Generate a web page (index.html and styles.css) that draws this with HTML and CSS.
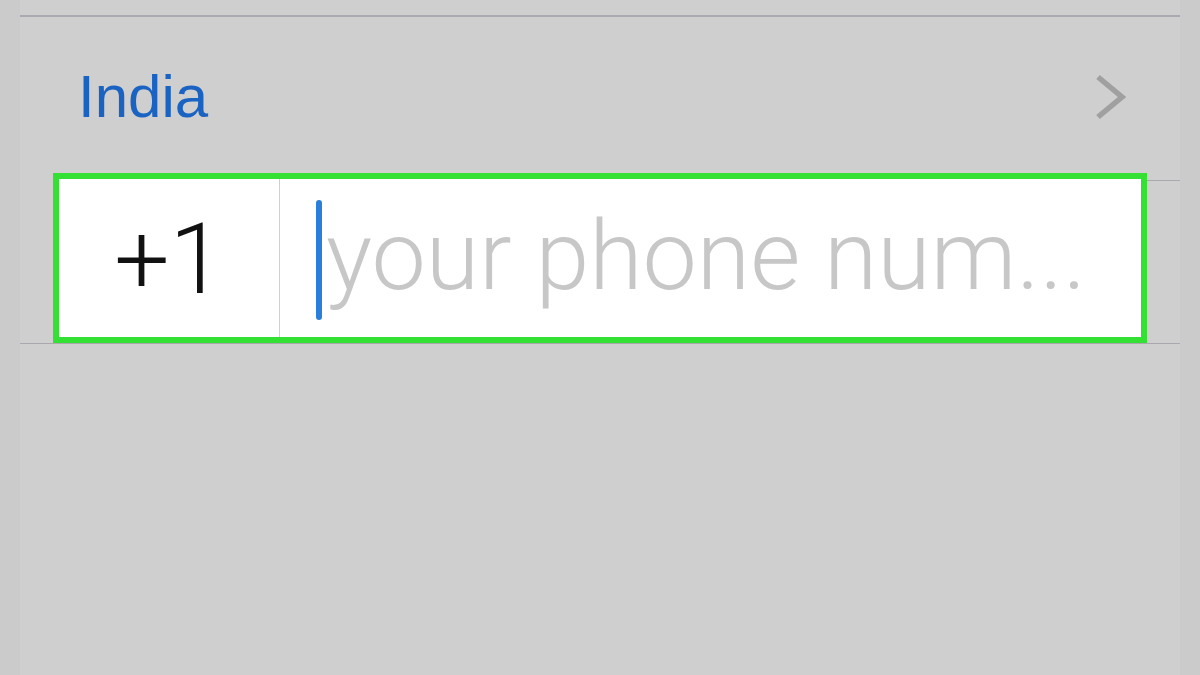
FILE: index.html
```html
<!DOCTYPE html>
<html>
<head>
<meta charset="utf-8">
<link rel="stylesheet" href="styles.css">
</head>
<body>
<div class="screen">
  <div class="rule"></div>
  <div class="country">
    <span class="country-name">India</span>
    <svg class="chevron" width="32" height="48" viewBox="0 0 32 48"><polyline points="4,4 28,24 4,44" fill="none" stroke="#a0a0a0" stroke-width="5.5"/></svg>
  </div>
  <div class="phone">
    <div class="box">
      <div class="code">+1</div>
      <div class="field">
        <span class="cursor"></span>
        <span class="placeholder">your phone num...</span>
      </div>
    </div>
    <div class="tail"></div>
  </div>
</div>
</body>
</html>
```
FILE: styles.css
```css
html, body { margin: 0; padding: 0; }
body {
  background: #cbcbcb;
  font-family: "Liberation Sans", Arial, sans-serif;
  width: 1200px;
  height: 675px;
  overflow: hidden;
}
.screen {
  margin: 0 20px;
  height: 675px;
  background: #cfcfcf;
  padding-top: 15px;
  box-sizing: border-box;
}
.rule {
  height: 2px;
  background: #aaaab2;
}
.country {
  display: flex;
  justify-content: space-between;
  align-items: flex-start;
  height: 156px;
  box-sizing: border-box;
  padding: 50px 54px 0 58px;
}
.country-name {
  font-size: 60px;
  line-height: 60px;
  color: #1b63c2;
}
.chevron {
  margin-top: 6px;
}
.phone {
  display: flex;
  align-items: flex-start;
  border-bottom: 1px solid #a9a9ad;
}
.box {
  margin-left: 33px;
  width: 1094px;
  height: 170px;
  box-sizing: border-box;
  border: 6px solid #34e034;
  background: #ffffff;
  display: flex;
}
.tail {
  flex: 1;
  margin-top: 7px;
  border-top: 1px solid #a9a9ad;
}
.code {
  width: 221px;
  flex: none;
  border-right: 1px solid #cfcfcf;
  display: flex;
  align-items: center;
  justify-content: center;
  font-family: Roboto, "Liberation Sans", sans-serif;
  font-weight: 300;
  font-size: 98px;
  line-height: 98px;
  color: #111111;
  padding-top: 4px;
  box-sizing: border-box;
}
.field {
  flex: 1;
  display: flex;
  align-items: center;
  padding-left: 36px;
}
.cursor {
  width: 6px;
  height: 120px;
  border-radius: 3px;
  background: #2a7fda;
  flex: none;
  margin-top: 4px;
}
.placeholder {
  font-family: Roboto, "Liberation Sans", sans-serif;
  font-weight: 300;
  font-size: 97px;
  line-height: 97px;
  color: #c7c7c7;
  margin-left: 4px;
  margin-top: -4px;
  white-space: nowrap;
}
```
